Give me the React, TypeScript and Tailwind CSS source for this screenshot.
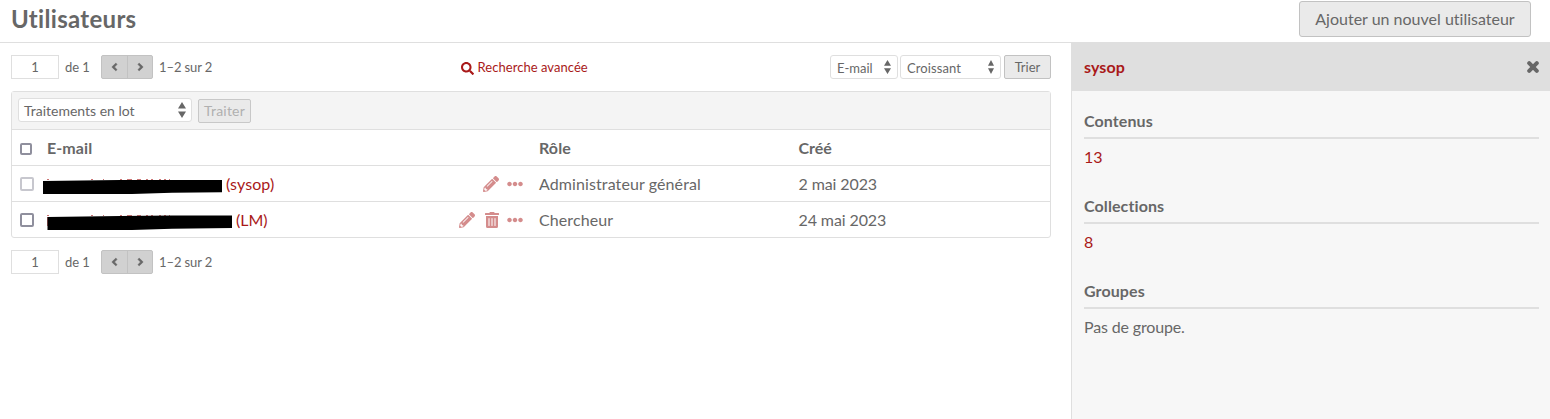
import React from "react";
import { FaAngleLeft, FaAngleRight, FaEllipsisH, FaPencilAlt, FaSearch, FaTrashAlt } from "react-icons/fa";

function Arrows({ className }: { className: string }) {
  return (
    <svg viewBox="0 0 8 16" preserveAspectRatio="none" className={className} fill="#676767">
      <path d="M4 0 8 6.6H0ZM4 16 8 9.4H0Z" />
    </svg>
  );
}

function Pagination() {
  return (
    <div className="flex h-6 items-center text-[13px]">
      <div className="flex h-6 w-12 items-center justify-center border border-[#dfdfdf] bg-white pt-px">1</div>
      <span className="ml-1.5 mt-px w-9 tracking-[-0.1px]">de 1</span>
      <div className="flex h-6 w-[52px] rounded-[2px] border border-[#c2c2c2] bg-[#d1d1d1]">
        <button className="flex w-[26px] items-center justify-center border-r border-[#c2c2c2]">
          <FaAngleLeft className="h-3 w-[13px]" stroke="currentColor" strokeWidth={24} />
        </button>
        <button className="flex w-6 items-center justify-center">
          <FaAngleRight className="h-3 w-[13px]" stroke="currentColor" strokeWidth={24} />
        </button>
      </div>
      <span className="ml-1.5 mt-px tracking-[-0.1px]">1–2 sur 2</span>
    </div>
  );
}

function Checkbox({ className }: { className: string }) {
  return <span className={`block shrink-0 rounded-[2px] border-2 bg-white ${className}`} />;
}

function Section({ title, children }: { title: string; children: React.ReactNode }) {
  return (
    <section className="mb-6">
      <h4 className="mb-1.5 h-[31px] border-b-2 border-[#dfdfdf] pt-px font-bold leading-6 tracking-[0.1px]">{title}</h4>
      <div className="h-6 leading-6">{children}</div>
    </section>
  );
}

const grid = "grid grid-cols-[527px_259.5px_1fr] items-center";
const specks = "M5 13h2v1H5zm44 0h2v1h-2zm12 0h1v1h-1zm17 0h2v1h-2zm7 0h5v1h-5zm10 0h4v1h-4zm9 0h2v1h-2zm5 0h2v1h-2zm8 0h2v1h-2zm5 0h2v1h-2zm5 0h1v1h-1z";

export default function App() {
  return (
    <div className="flex h-[419px] w-[1550px] flex-col overflow-hidden bg-white font-['Lato',sans-serif] text-base text-[#676767] [font-variant-ligatures:none]">
      <header className="flex h-[43px] shrink-0 justify-between border-b border-[#dfdfdf] pl-[11px] pr-[19px]">
        <h1 className="mt-px text-2xl font-bold leading-9 tracking-[0.3px]">Utilisateurs</h1>
        <button className="mt-px h-9 w-[232px] rounded-[3px] border border-[#c2c2c2] bg-[#eaeaea]">
          Ajouter un nouvel utilisateur
        </button>
      </header>
      <div className="flex flex-1">
        <main className="w-[1071px] pl-[11px] pr-5 pt-3">
          <div className="mb-3 flex justify-between">
            <Pagination />
            <a className="flex items-center pl-[7px] text-[13px] leading-6 tracking-[0.05px] text-[#a91919]">
              <FaSearch className="mr-[3px] mt-[3px] size-[13px]" />
              Recherche avancée
            </a>
            <div className="flex h-6 text-[13px]">
              <div className="mr-0.5 flex w-[68px] items-center justify-between rounded-[3px] border border-[#dfdfdf] pl-1.5 pr-1.5">
                <span className="mt-[3px]">E-mail</span>
                <Arrows className="h-3.5 w-[7px]" />
              </div>
              <div className="mr-[3px] flex w-[101px] items-center justify-between rounded-[3px] border border-[#dfdfdf] pl-1.5 pr-1.5">
                <span className="mt-[3px] tracking-[0.1px]">Croissant</span>
                <Arrows className="h-3.5 w-1.5" />
              </div>
              <button className="w-[47px] rounded-[2px] border border-[#c2c2c2] bg-[#eaeaea] pt-px">Trier</button>
            </div>
          </div>

          <div className="mb-3 h-[147px] rounded-[3px] border border-[#dfdfdf]">
            <div className="flex h-[38px] border-b border-[#dfdfdf] bg-[#f4f4f4] pl-1.5 pt-1.5 text-sm">
              <div className="mr-1.5 flex h-6 w-[174px] items-center justify-between rounded-[3px] border border-[#dfdfdf] bg-white px-[5px]">
                <span className="mt-0.5">Traitements en lot</span>
                <Arrows className="h-4 w-2" />
              </div>
              <button className="mt-px h-6 w-[53px] rounded-[2px] border border-[#c8c8c8] bg-[#eaeaea] tracking-[0.2px] text-[#b0b0b0]">
                Traiter
              </button>
            </div>

            <div className={`${grid} h-9 border-b border-[#dfdfdf] font-bold`}>
              <div className="flex items-center pl-2 tracking-[0.1px]">
                <Checkbox className="mr-[15px] mt-0.5 size-3 border-[#8f8f9d]" />
                E-mail
              </div>
              <div className="tracking-[0.1px]">Rôle</div>
              <div>Créé</div>
            </div>

            <div className={`${grid} h-9 border-b border-[#dfdfdf]`}>
              <div className="flex items-center pl-2 text-[#a91919]">
                <Checkbox className="size-3.5 border-[#c7c7ce]" />
                <svg className="ml-2 h-9 w-[184px]" viewBox="0 0 184 36">
                  <path d={specks} fill="#a91919" opacity=".6" />
                  <path d="M1 15 78 14H180V26.3L130 26.8 90 28H1Z" fill="#000" />
                </svg>
                <span className="tracking-[0.1px]">(sysop)</span>
                <span className="ml-auto mr-4 flex gap-2 text-[#d48c8c]">
                  <FaPencilAlt className="size-4" />
                  <FaEllipsisH className="size-4" />
                </span>
              </div>
              <div className="tracking-[0.1px]">Administrateur général</div>
              <div className="tracking-[-0.1px]">2 mai 2023</div>
            </div>

            <div className={`${grid} h-9`}>
              <div className="flex items-center pl-2 text-[#a91919]">
                <Checkbox className="size-3.5 border-[#8f8f9d]" />
                <svg className="ml-2 h-9 w-[194px]" viewBox="0 0 194 36">
                  <path d={specks} fill="#a91919" opacity=".6" />
                  <path d="M5 15h1v9H5z" fill="#a91919" opacity=".6" />
                  <path d="M5.5 15 78 14 130 13.5H190V26L130 26.8 90 28H5.5Z" fill="#000" />
                </svg>
                <span>(LM)</span>
                <span className="ml-auto mr-4 flex gap-2 text-[#d48c8c]">
                  <FaPencilAlt className="size-4" />
                  <FaTrashAlt className="ml-0.5 h-4 w-3.5" />
                  <FaEllipsisH className="size-4" />
                </span>
              </div>
              <div className="tracking-[0.1px]">Chercheur</div>
              <div className="tracking-[-0.1px]">24 mai 2023</div>
            </div>
          </div>
          <Pagination />
        </main>

        <aside className="-mt-px w-[479px] border-l border-[#dfdfdf] bg-[#f7f7f7]">
          <div className="flex h-[49px] items-center justify-between bg-[#dfdfdf] pl-3 pr-[11px]">
            <h3 className="font-bold tracking-[0.1px] text-[#a91919]">sysop</h3>
            <svg className="size-3" viewBox="0 0 12 12" stroke="#676767" strokeWidth="4" strokeLinecap="round">
              <path d="m2.2 2.2 7.6 7.6m0-7.6L2.2 9.8" />
            </svg>
          </div>
          <div className="pl-3 pr-[11px] pt-[17px]">
            <Section title="Contenus"><a className="text-[#a91919]">13</a></Section>
            <Section title="Collections"><a className="text-[#a91919]">8</a></Section>
            <Section title="Groupes"><span className="tracking-[-0.15px]">Pas de groupe.</span></Section>
          </div>
        </aside>
      </div>
    </div>
  );
}
